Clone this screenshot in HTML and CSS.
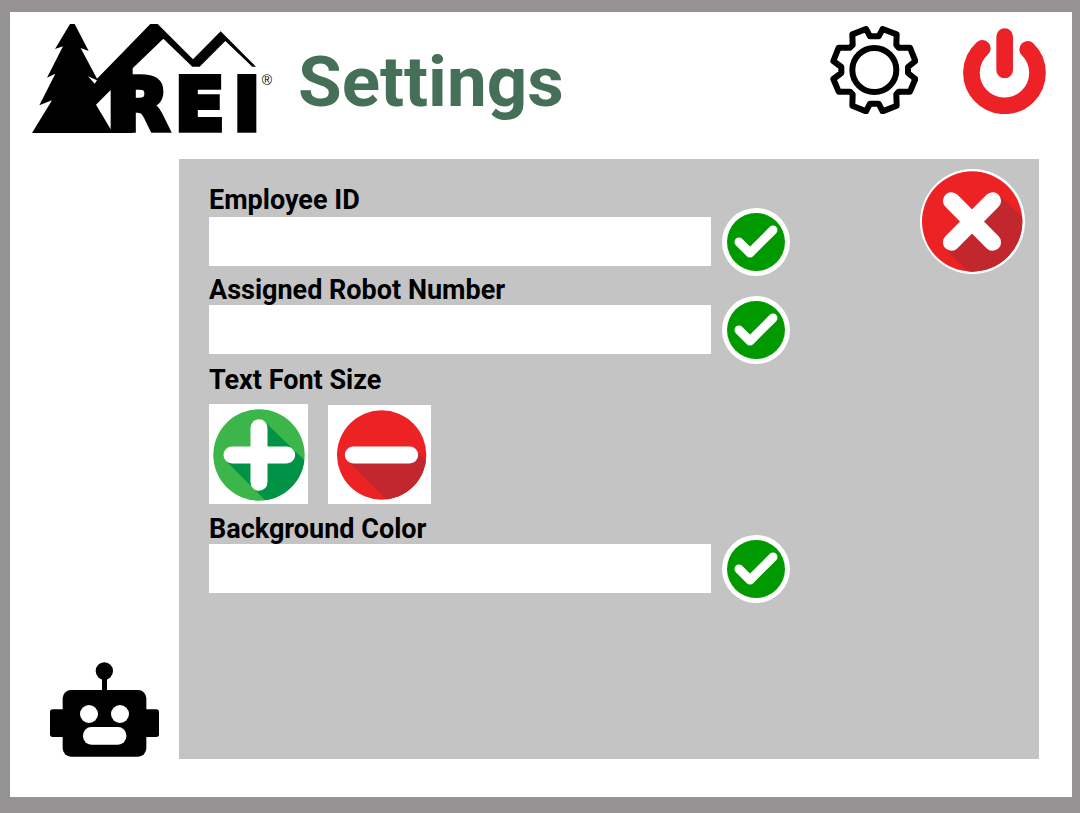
FILE: index.html
```html
<!DOCTYPE html>
<html lang="en">
<head>
<meta charset="utf-8">
<meta name="viewport" content="width=device-width, initial-scale=1">
<title>REI Settings</title>
<link rel="stylesheet" href="styles.css">
</head>
<body class="screen">
<header class="header">
  <svg class="logo" viewBox="36 42 720 330" role="img" aria-label="REI">
    <path d="M150 42h14l42 81-24-9 49 92 160-164h22l106 106 83-84 106 106h-11l-81-77-77 77h-22L430 86 338 175v194H36l60-98-38 15 48-95-25 12 48-94-24 8z"/>
    <path class="logo-gap" d="M204 199l20 22 7-10zM228 284l44-44v118z"/>
    <g class="logo-word">
      <text x="278" y="361">R</text><text x="464" y="361">E</text><text x="640" y="361">I</text>
    </g>
    <text class="logo-mark" x="725" y="224">®</text>
  </svg>
  <h1 class="title">Settings</h1>
  <nav class="actions" aria-label="System">
    <button class="icon-button" type="button" aria-label="Settings">
      <svg class="gear" viewBox="30 33 264 264">
        <path class="gear-line" d="M138 42l12 22h26l12-22 42 16-1 32 7 8h34l16 40-22 18v18l22 18-16 38h-34l-7 8 1 34-42 17-12-23h-26l-12 23-41-17 1-34-8-8H56l-16-38 24-18v-18l-24-18 16-40h34l8-8-1-32z"/>
        <circle class="gear-line" cx="163" cy="165" r="66"/>
      </svg>
    </button>
    <button class="icon-button" type="button" aria-label="Power">
      <svg class="power" viewBox="429 42 249 258">
        <path class="power-ring" d="M487 103A99 99 0 1 0 623 106"/>
        <path class="power-bar" d="M554 68v100"/>
      </svg>
    </button>
  </nav>
</header>
<main class="main">
  <aside class="side">
    <svg class="robot" viewBox="60 36 327 285" role="img" aria-label="Robot">
      <circle cx="223" cy="63" r="26"/>
      <path d="M216 80h15v50h-15z"/>
      <rect x="98" y="120" width="251" height="200" rx="25"/>
      <rect x="60" y="178" width="327" height="83" rx="8"/>
      <g class="robot-face"><circle cx="177" cy="192" r="27"/><circle cx="270" cy="192" r="27"/><rect x="159" y="231" width="130" height="53" rx="25"/></g>
    </svg>
  </aside>
  <section class="panel">
    <form class="form">
      <div class="field field-first">
        <label class="label" for="employee">Employee ID</label>
        <input class="input" id="employee" type="text">
        <button class="icon-button confirm" type="button" aria-label="Confirm employee ID">
          <svg class="check" viewBox="0 0 68 68"><circle class="white" cx="34" cy="34" r="34"/><circle class="check-disc" cx="34" cy="34" r="29"/><path class="check-tick" d="M17 34l11 11 23-23"/></svg>
        </button>
      </div>
      <div class="field">
        <label class="label" for="robot">Assigned Robot Number</label>
        <input class="input" id="robot" type="text">
        <button class="icon-button confirm" type="button" aria-label="Confirm robot number">
          <svg class="check" viewBox="0 0 68 68"><circle class="white" cx="34" cy="34" r="34"/><circle class="check-disc" cx="34" cy="34" r="29"/><path class="check-tick" d="M17 34l11 11 23-23"/></svg>
        </button>
      </div>
      <div class="sizes" role="group" aria-labelledby="size-label">
        <span class="label" id="size-label">Text Font Size</span>
        <div class="size-buttons">
          <button class="icon-button" type="button" aria-label="Increase text size">
            <svg class="plus" viewBox="41 132 297 300">
              <clipPath id="plus-disc"><circle cx="191" cy="285" r="137"/></clipPath>
              <rect class="white" x="41" y="132" width="297" height="300"/>
              <circle class="green" cx="191" cy="285" r="137"/>
              <path class="green-shade" clip-path="url(#plus-disc)" d="M209 186l131 127v120H222L92 303l99-18z"/>
              <path class="sign" d="M191 203v164M110 285h164"/>
            </svg>
          </button>
          <button class="icon-button" type="button" aria-label="Decrease text size">
            <svg class="minus" viewBox="399 135 309 297">
              <clipPath id="minus-disc"><circle cx="560" cy="285" r="134"/></clipPath>
              <rect class="white" x="399" y="135" width="309" height="297"/>
              <circle class="red" cx="560" cy="285" r="134"/>
              <path class="red-shade" clip-path="url(#minus-disc)" d="M660 268l50 50v120H593L457 302z"/>
              <path class="sign" d="M475 285h169"/>
            </svg>
          </button>
        </div>
      </div>
      <div class="field">
        <label class="label" for="color">Background Color</label>
        <input class="input" id="color" type="text">
        <button class="icon-button confirm" type="button" aria-label="Confirm background color">
          <svg class="check" viewBox="0 0 68 68"><circle class="white" cx="34" cy="34" r="34"/><circle class="check-disc" cx="34" cy="34" r="29"/><path class="check-tick" d="M17 34l11 11 23-23"/></svg>
        </button>
      </div>
    </form>
    <button class="icon-button close" type="button" aria-label="Close">
      <svg class="cross" viewBox="60 57 314 314">
        <clipPath id="cross-disc"><circle cx="216" cy="214" r="150"/></clipPath>
        <circle class="white" cx="217" cy="214" r="157"/>
        <circle class="red" cx="216" cy="214" r="150"/>
        <path class="red-shade" clip-path="url(#cross-disc)" d="M296 134l80 76v170H220L135 294l81-80z"/>
        <path class="sign" d="M154 152l123 124M277 152L154 276"/>
      </svg>
    </button>
  </section>
</main>
</body>
</html>
```

FILE: styles.css
```css
* { box-sizing: border-box; }

.screen {
  margin: 0;
  min-height: 100vh;
  display: flex;
  flex-direction: column;
  border: solid #949292;
  border-width: 12px 8px 16px 10px;
  background: #fff;
  color: #000;
  font-family: Roboto, "Liberation Sans", sans-serif;
}

.header {
  display: flex;
  align-items: flex-start;
  gap: 26px;
  min-height: 147px;
  padding: 12px 26px 0 22px;
}

.logo { width: 240px; height: 110px; flex: none; overflow: visible; }
.logo-gap { fill: #fff; }
.logo-word {
  font-family: "DejaVu Sans", sans-serif;
  font-weight: 700;
  font-size: 219px;
  stroke: #000;
  stroke-width: 16px;
}
.logo-mark { font-family: "Liberation Sans", sans-serif; font-size: 42px; }

.title {
  margin: 16px 0 0;
  font-size: 71px;
  line-height: 84px;
  font-weight: 700;
  color: #456f56;
}

.actions {
  display: flex;
  align-items: flex-end;
  gap: 45px;
  margin-left: auto;
  padding-top: 2px;
}

.icon-button {
  display: block;
  flex: none;
  padding: 0;
  border: 0;
  background: none;
  cursor: pointer;
}
.icon-button svg { display: block; }

.gear { width: 88px; height: 88px; }
.gear-line { fill: none; stroke: #000; stroke-width: 18px; stroke-linejoin: round; }
.power { width: 83px; height: 86px; }
.power-ring,
.power-bar { fill: none; stroke: #ed2227; stroke-width: 50px; stroke-linecap: round; }

.main {
  flex: 1;
  display: flex;
  padding: 0 33px 38px 0;
}

.side {
  flex: none;
  display: flex;
  align-items: flex-end;
  width: 169px;
  padding: 0 0 2px 40px;
}
.robot { width: 109px; height: 95px; }
.robot-face { fill: #fff; }

.panel {
  flex: 1;
  display: flex;
  justify-content: space-between;
  align-items: flex-start;
  padding: 10px 14px 30px 30px;
  background: #c4c4c4;
}

.form {
  flex: 0 1 581px;
  display: flex;
  flex-direction: column;
  gap: 9px;
  padding-top: 16px;
}

.field {
  display: grid;
  grid-template-columns: 1fr 68px;
  column-gap: 11px;
}
.field-first { row-gap: 2px; }

.label {
  display: block;
  font-size: 27px;
  line-height: 30px;
  font-weight: 700;
}

.input {
  grid-row: 2;
  width: 100%;
  height: 49px;
  padding: 0 12px;
  border: 0;
  border-radius: 0;
  background: #fff;
  font: inherit;
  font-size: 27px;
}

.confirm {
  grid-column: 2;
  grid-row: 1 / 3;
  align-self: end;
  margin-bottom: -10px;
}
.check { width: 68px; height: 68px; }
.check-disc { fill: #090; }
.check-tick { fill: none; stroke: #fff; stroke-width: 9px; stroke-linecap: round; stroke-linejoin: round; }

.sizes { padding: 2px 0 1px; }
.size-buttons {
  display: flex;
  align-items: flex-end;
  gap: 20px;
  padding-top: 9px;
}
.plus { width: 99px; height: 100px; }
.minus { width: 103px; height: 99px; }
.cross { width: 105px; height: 105px; }

.white { fill: #fff; }
.green { fill: #3cb54a; }
.green-shade { fill: #009345; }
.red { fill: #ed2224; }
.red-shade { fill: #c1272d; }
.sign { fill: none; stroke: #fff; stroke-width: 51px; stroke-linecap: round; }
```
